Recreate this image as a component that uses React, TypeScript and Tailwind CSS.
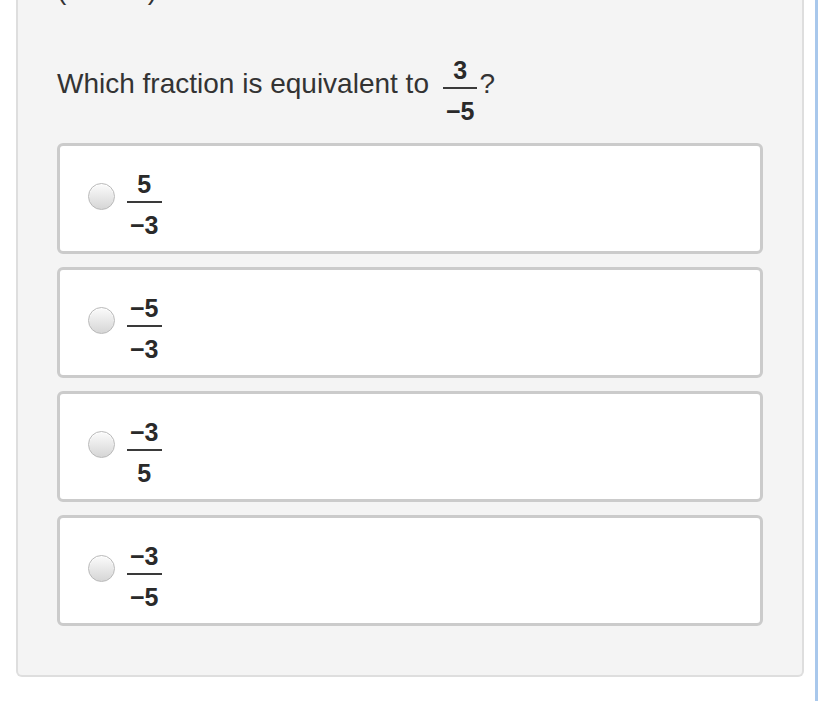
import React from 'react';

const font = { fontFamily: '"Liberation Sans", Arial, Helvetica, sans-serif' };

type FractionProps = { num: string; den: string; className?: string };

function Fraction({ num, den, className = '' }: FractionProps) {
  return (
    <span className={`inline-flex flex-col items-stretch text-[25px] font-bold leading-[25px] text-[#2a2a2a] ${className}`}>
      <span className="px-[3px] text-center">{num}</span>
      <span className="mt-[4px] h-[2px] bg-[#3a3a3a]" />
      <span className="mt-[10px] px-[3px] text-center">{den}</span>
    </span>
  );
}

const options = [
  { num: '5', den: '−3' },
  { num: '−5', den: '−3' },
  { num: '−3', den: '5' },
  { num: '−3', den: '−5' },
];

export default function App() {
  return (
    <div className="flex h-[701px] w-[818px] overflow-hidden bg-white" style={font}>
      <div className="w-[16px] shrink-0" />
      <div className="h-[677px] w-[788px] shrink-0 rounded-b-[6px] border-x-2 border-b-2 border-[#dedede] bg-[#f4f4f4] px-[39px] pb-[48px]">
        <div className="h-[6px] overflow-hidden">
          <div className="-mt-[26px] flex w-[100px] justify-between text-[28px] leading-[32px] text-[#333]">
            <span>(</span>
            <span>)</span>
          </div>
        </div>
        <div className="mt-[37px] flex items-center text-[28px] leading-[32px] text-[#333]">
          <span>Which fraction is equivalent to</span>
          <Fraction num="3" den="−5" className="ml-[14px] mr-[2px] mt-[15px]" />
          <span>?</span>
        </div>
        <div className="mt-[19px] flex flex-col gap-[13px]">
          {options.map((o, i) => (
            <label
              key={i}
              className="flex h-[111px] items-center rounded-[6px] border-[3px] border-[#cbcbcb] bg-white pl-[28px]"
            >
              <span className="mb-[5px] h-[27px] w-[27px] shrink-0 rounded-full border border-[#b9b9b9] bg-gradient-to-b from-[#fbfbfb] to-[#d6d6d6] shadow-[inset_0_1px_1px_rgba(255,255,255,0.8)]" />
              <Fraction num={o.num} den={o.den} className="ml-[12px] mt-[12px]" />
            </label>
          ))}
        </div>
      </div>
      <div className="w-[11px] shrink-0" />
      <div className="h-full w-[3px] shrink-0 bg-[#a9c8ec]" />
    </div>
  );
}
